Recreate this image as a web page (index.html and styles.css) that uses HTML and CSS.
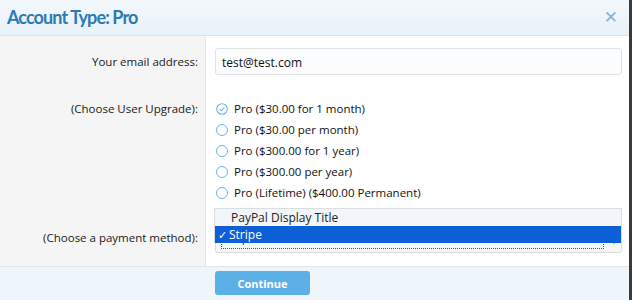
FILE: index.html
```html
<!DOCTYPE html>
<html>
<head>
<meta charset="utf-8">
<link rel="stylesheet" href="styles.css">
</head>
<body>
<div class="dialog">
  <div class="header">
    <h2 class="title">Account Type: Pro</h2>
    <span class="close">&#x2715;</span>
  </div>
  <div class="body">
    <div class="row row-email">
      <div class="label">Your email address:</div>
      <div class="field"><div class="input">test@test.com</div></div>
    </div>
    <div class="row row-upgrade">
      <div class="label label-top">(Choose User Upgrade):</div>
      <div class="field">
        <ul class="radios">
          <li><span class="radio checked"><svg viewBox="0 0 12 12" width="12" height="12"><circle cx="6" cy="6" r="5.3" fill="none" stroke="#6db3e6" stroke-width="1.1"/><path d="M3.6 6.2 L5.3 7.8 L8.4 4.4" fill="none" stroke="#6db3e6" stroke-width="1.1"/></svg></span>Pro ($30.00 for 1 month)</li>
          <li><span class="radio"></span>Pro ($30.00 per month)</li>
          <li><span class="radio"></span>Pro ($300.00 for 1 year)</li>
          <li><span class="radio"></span>Pro ($300.00 per year)</li>
          <li><span class="radio"></span>Pro (Lifetime) ($400.00 Permanent)</li>
        </ul>
      </div>
    </div>
    <div class="row row-pay">
      <div class="label">(Choose a payment method):</div>
      <div class="field field-pay">
        <div class="select"><span class="focus">Stripe</span><span class="arrow">▾</span></div>
        <div class="popup">
          <div class="opt">PayPal Display Title</div>
          <div class="opt sel"><span class="tick">✓</span>Stripe</div>
        </div>
      </div>
    </div>
  </div>
  <div class="footer">
    <button class="btn">Continue</button>
  </div>
  <div class="edge"></div>
</div>
</body>
</html>
```

FILE: styles.css
```css
html, body { margin: 0; padding: 0; }
body {
  width: 632px; height: 300px; overflow: hidden;
  font-family: "Open Sans", "DejaVu Sans", sans-serif;
  font-size: 11px; color: #111;
  background: #fff;
}
.dialog { position: relative; width: 632px; height: 300px; display: flex; flex-direction: column; }
.header {
  height: 36px; box-sizing: border-box; flex: none;
  background: linear-gradient(#f3f8fc, #e8f2fa);
  border-bottom: 1px solid #d5e4f0;
  display: flex; align-items: center; justify-content: space-between;
  padding: 0 12px 0 7px;
}
.title {
  margin: 0; font-size: 18px; font-weight: bold; color: #2d7ab3;
  letter-spacing: -0.9px; font-family: "Lato", sans-serif;
  padding-bottom: 1px;
}
.close { color: #8ab2d0; font-size: 17px; font-weight: bold; margin-right: 2px; padding-bottom: 2px; font-family: "DejaVu Sans", sans-serif; }
.body {
  flex: 1;
  background: linear-gradient(to right, #f5f5f5 0, #f5f5f5 205px, #e6e6e6 205px, #e6e6e6 206px, #fff 206px);
  border-bottom: 1px solid #dde6ee;
  display: flex; flex-direction: column;
}
.row { display: grid; grid-template-columns: 206px 1fr; }
.label { text-align: right; padding-right: 8px; color: #1a1a1a; font-size: 11.5px; }
.field { padding-left: 9px; padding-right: 10px; position: relative; }
.row-email { padding-top: 12px; align-items: center; }
.input {
  height: 27px; box-sizing: border-box; border: 1px solid #e2e2e2; border-radius: 3px;
  background: #fafcfe; padding: 5px 6px; font-size: 12px; color: #111;
}
.row-upgrade { padding-top: 23px; }
.label-top { line-height: 21px; }
.radios { list-style: none; margin: 0; padding: 0; }
.radios li { height: 21px; line-height: 21px; display: flex; align-items: center; font-size: 11.5px; }
.radio {
  width: 10px; height: 10px; border: 1.2px solid #6db3e6; border-radius: 50%;
  margin: 0 6px 0 1px; box-sizing: content-box; flex: none;
}
.radio.checked { border: none; width: 12px; height: 12px; display: flex; }
.row-pay { padding-top: 5px; }
.row-pay .label { align-self: end; padding-bottom: 8px; }
.field-pay { height: 45px; display: flex; flex-direction: column; justify-content: flex-end; }
.select {
  height: 26px; box-sizing: border-box; border: 1px solid #dcdcdc; border-radius: 3px;
  background: #f4f6f8; padding: 3px 5px; display: flex; align-items: center; justify-content: space-between;
}
.focus { display: block; border: 1px dotted #555; height: 16px; font-size: 12px; line-height: 12px; overflow: hidden; color: #333; flex: 1; padding-left: 1px; }
.arrow { font-size: 8px; color: #333; margin-left: 8px; }
.popup {
  position: absolute; left: 8px; right: 10px; top: 0;
  background: #f2f6fa; border: 1px solid #d8dee4; border-bottom: none;
}
.opt { height: 17px; line-height: 17px; font-size: 12px; padding-left: 16px; color: #222; }
.opt.sel { background: #0d5fd8; color: #fff; padding-left: 3px; }
.tick { display: inline-block; width: 11px; font-size: 11px; }
.footer {
  height: 33px; box-sizing: border-box; background: #eef5fb; flex: none;
  padding: 4px 0 0 215px;
}
.btn {
  width: 95px; height: 24px; border: none; border-radius: 3px;
  background: #5cb0e8; color: #fff; font-weight: bold; font-size: 11px;
  font-family: "Open Sans", sans-serif;
}
.edge { position: absolute; right: 0; top: 0; width: 3px; height: 300px; background: #3a3a3a; }
```
